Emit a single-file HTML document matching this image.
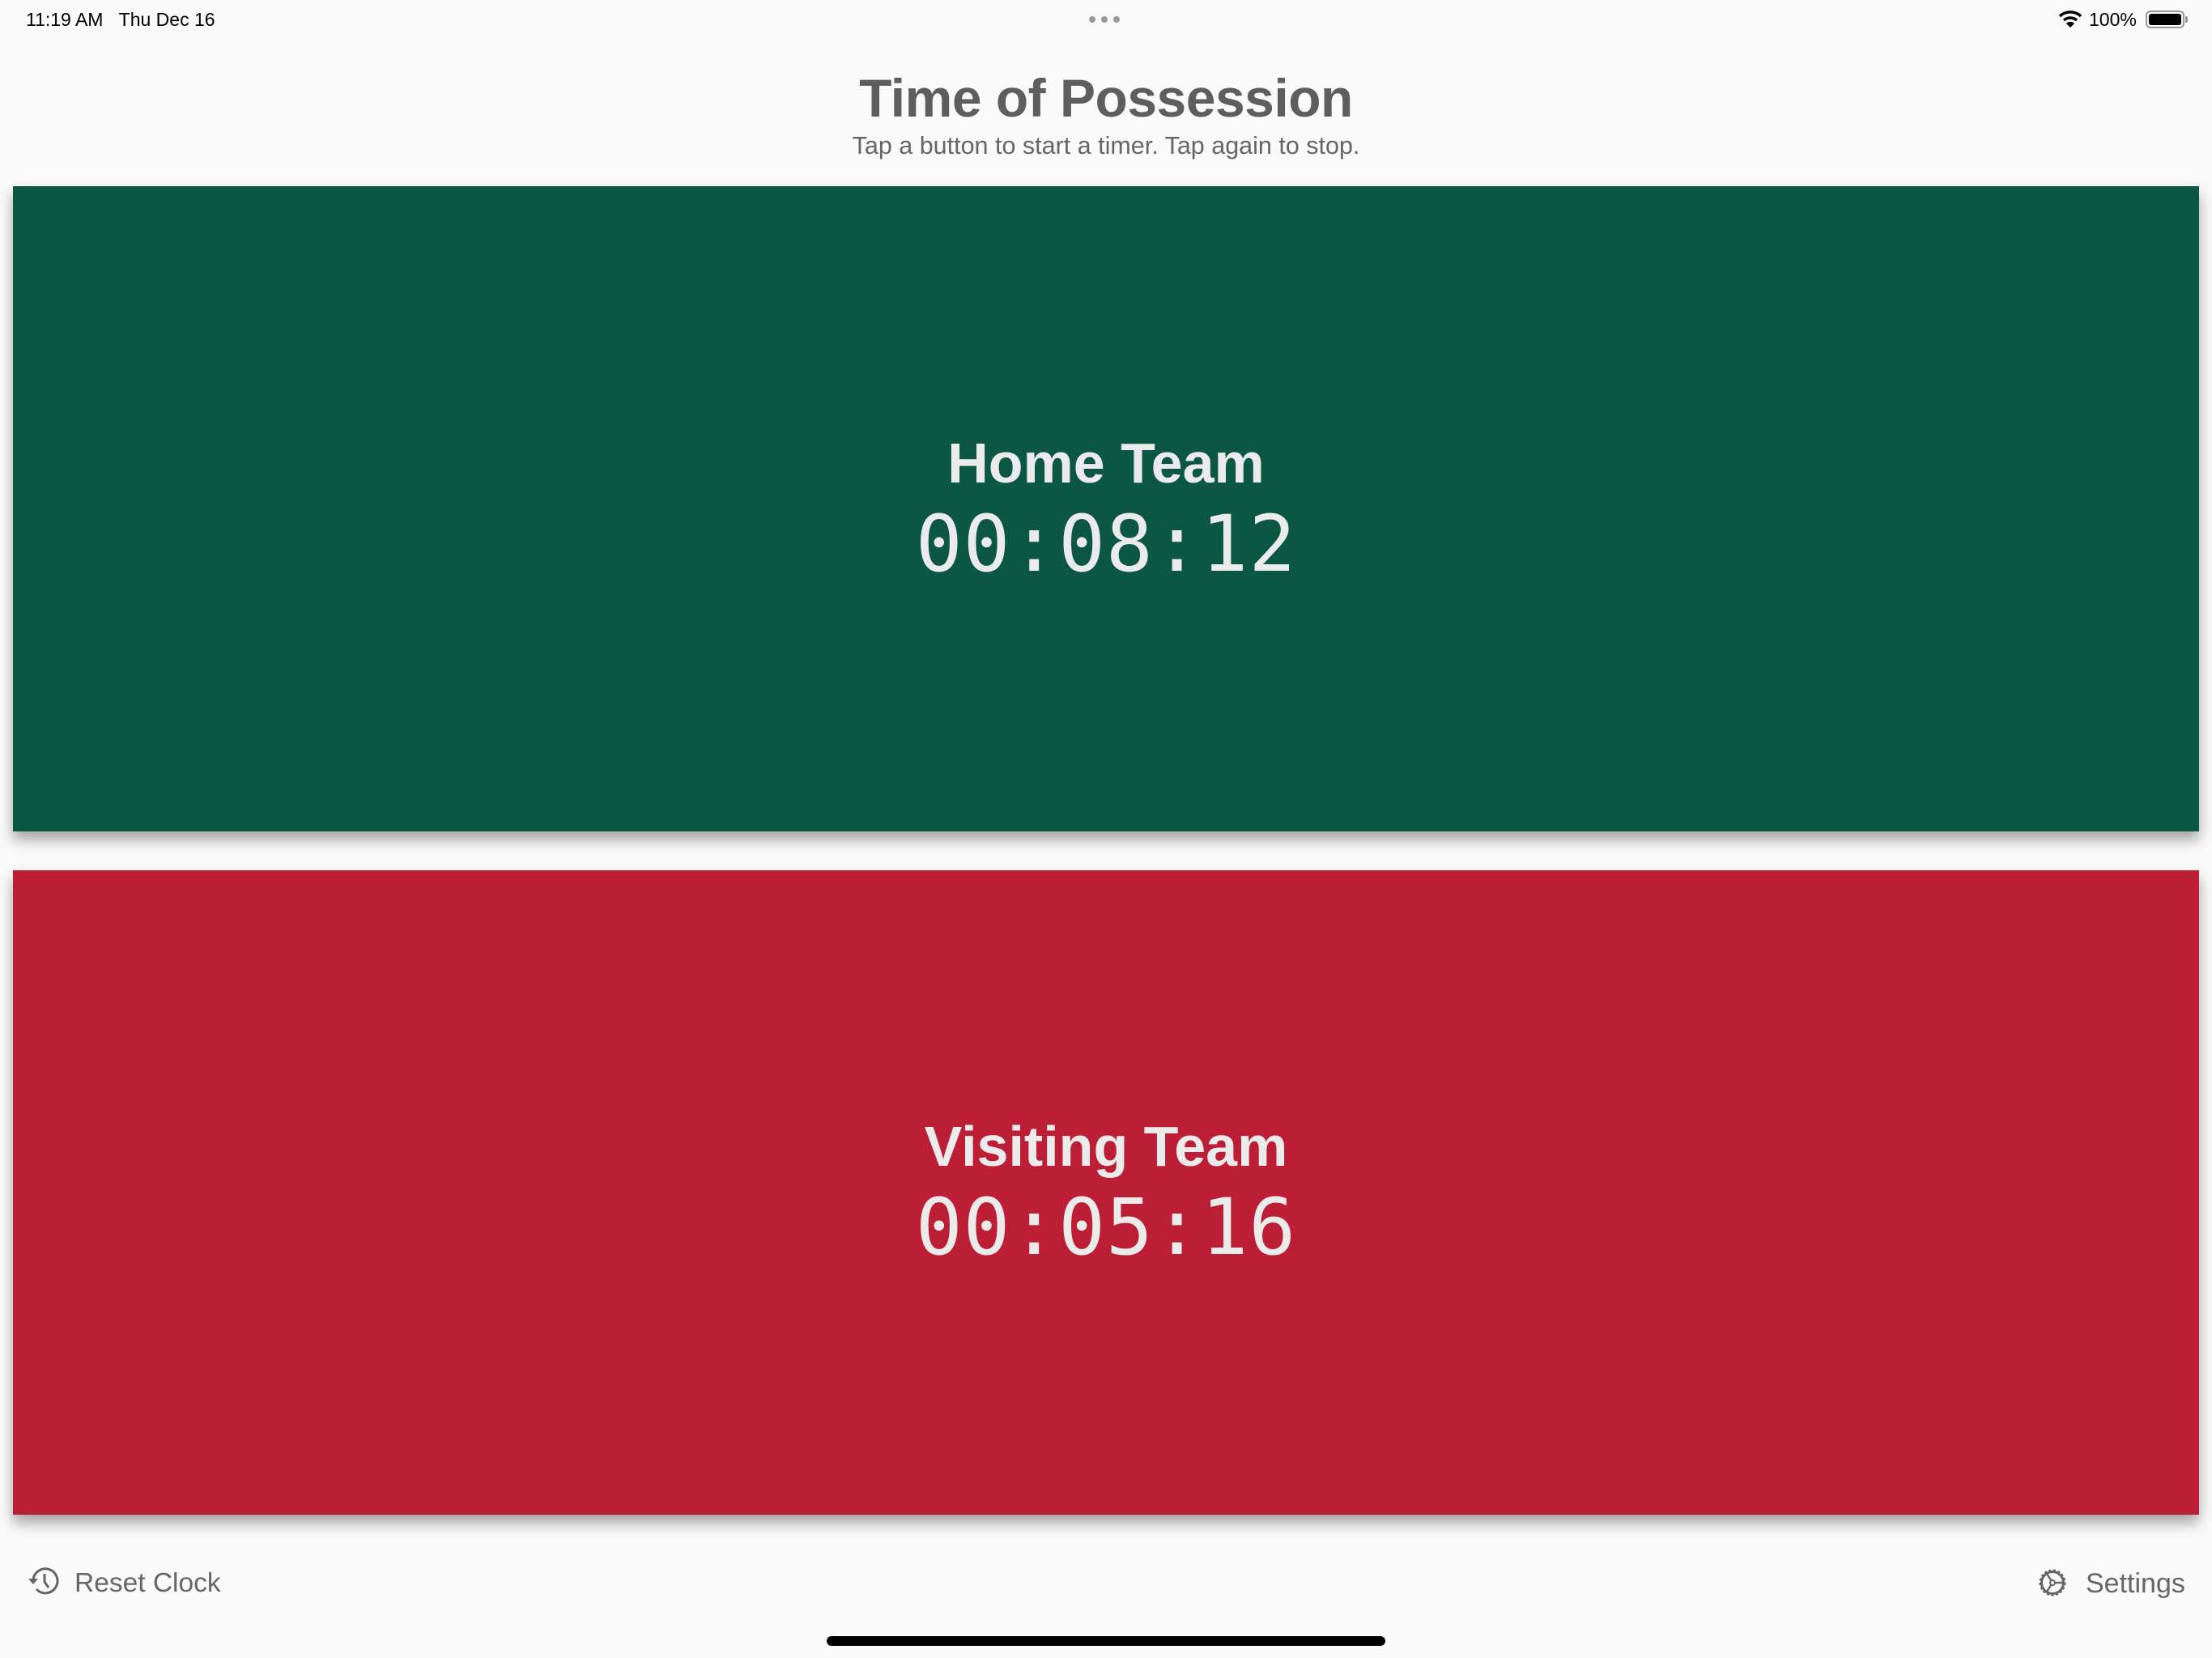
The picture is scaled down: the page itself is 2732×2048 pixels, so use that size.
<!DOCTYPE html>
<html><head><meta charset="utf-8"><style>
*{margin:0;padding:0;box-sizing:border-box}
body{width:2732px;height:2048px;background:#fafafa;position:relative;overflow:hidden;font-family:"Liberation Sans",sans-serif}
.abs{position:absolute}
.panel{position:absolute;left:16px;width:2700px;box-shadow:0 10px 16px rgba(0,0,0,0.35);text-align:center;color:#ebebeb}
.team{position:absolute;left:0;right:0;font-weight:bold;font-size:70px}
.time{position:absolute;left:0;right:0;font-family:"DejaVu Sans Mono","Liberation Mono",monospace;font-size:96px;letter-spacing:1px}
</style></head><body>
<div class="abs" style="left:32px;top:11px;font-size:23px;color:#000">11:19 AM&nbsp;&nbsp;&nbsp;Thu Dec 16</div>
<div class="abs" style="left:1345px;top:20px;width:8px;height:8px;border-radius:50%;background:#999;box-shadow:15px 0 #999,30px 0 #999"></div>
<svg class="abs" style="left:2542px;top:12px" width="30" height="22" viewBox="0 0 30 22"><path d="M2 8 A19 19 0 0 1 28 8" stroke="#000" stroke-width="3.5" fill="none"/><path d="M7 13 A12 12 0 0 1 23 13" stroke="#000" stroke-width="3.5" fill="none"/><path d="M10 17 L15 22 L20 17 A7 7 0 0 0 10 17Z" fill="#000"/></svg>
<div class="abs" style="left:2580px;top:11px;font-size:23px;color:#000">100%</div>
<div class="abs" style="left:2650px;top:13px;width:48px;height:22px;border:2px solid #999;border-radius:6px;padding:2px"><div style="width:100%;height:100%;background:#000;border-radius:3px"></div></div>
<div class="abs" style="left:2699px;top:20px;width:3px;height:8px;background:#999;border-radius:0 2px 2px 0"></div>
<div class="abs" style="left:0;width:2732px;top:83px;text-align:center;font-weight:bold;font-size:66px;color:#5e5e5e;letter-spacing:-0.5px">Time of Possession</div>
<div class="abs" style="left:0;width:2732px;top:163px;text-align:center;font-size:30.5px;color:#666">Tap a button to start a timer. Tap again to stop.</div>
<div class="panel" style="top:230px;height:797px;background:#0b5744">
<div class="team" style="top:302px">Home Team</div>
<div class="time" style="top:386px">00:08:12</div></div>
<div class="panel" style="top:1075px;height:796px;background:#bc1e36">
<div class="team" style="top:301px">Visiting Team</div>
<div class="time" style="top:385px">00:05:16</div></div>
<svg class="abs" style="left:33px;top:1936px" width="42" height="34" viewBox="0 0 42 34"><path d="M8 17 A15 15 0 1 1 12 27" stroke="#666" stroke-width="3" fill="none"/><path d="M2 14 L8 21 L14 14Z" fill="#666"/><path d="M22 8 L22 18 L27 25" stroke="#666" stroke-width="3" fill="none"/></svg>
<div class="abs" style="left:92px;top:1937px;font-size:33.5px;color:#666">Reset Clock</div>
<svg class="abs" style="left:2515px;top:1935px" width="40" height="40" viewBox="0 0 40 40"><circle cx="20" cy="20" r="15" stroke="#666" stroke-width="3" fill="none" stroke-dasharray="3 2.5"/><circle cx="20" cy="20" r="13.5" stroke="#666" stroke-width="3" fill="none"/><circle cx="20" cy="20" r="3" stroke="#666" stroke-width="2" fill="none"/><path d="M22.5 20 H33 M18.5 17.5 L13 9 M18.5 22.5 L13 31" stroke="#666" stroke-width="2.5"/></svg>
<div class="abs" style="left:2576px;top:1937px;font-size:34px;color:#666">Settings</div>
<div class="abs" style="left:1021px;top:2021px;width:690px;height:12px;border-radius:6px;background:#000"></div>
</body></html>
